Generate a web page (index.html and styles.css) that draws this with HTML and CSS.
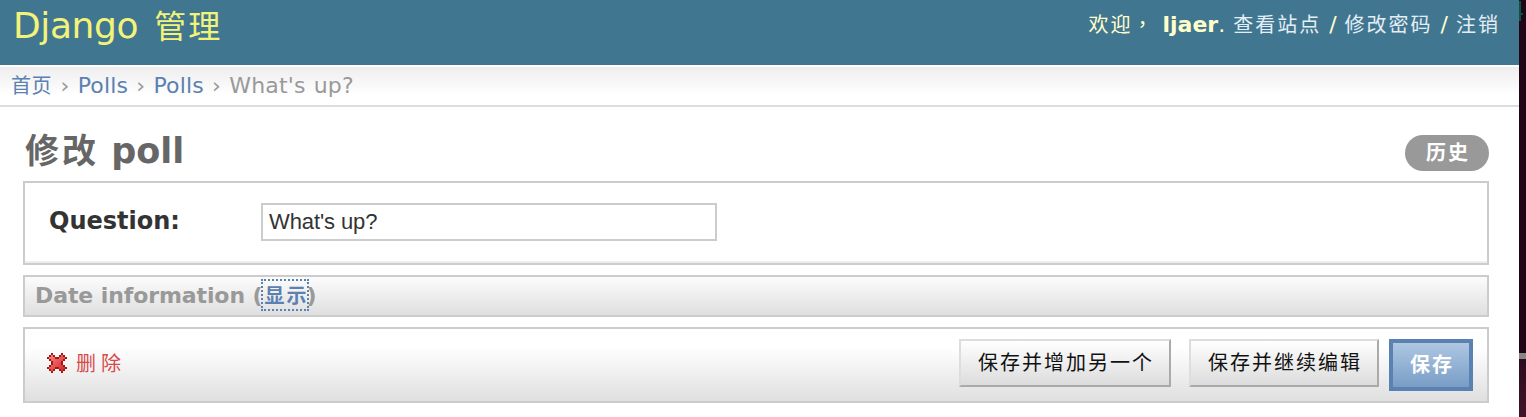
FILE: index.html
```html
<!DOCTYPE html>
<html lang="zh-CN">
<head>
<meta charset="utf-8">
<title>修改 poll | Django 管理</title>
<link rel="stylesheet" href="styles.css">
</head>
<body>
<div class="screen">
  <div class="page">
    <header class="header">
      <div class="branding">Django <span class="zh-title">管理</span></div>
      <div class="user-tools"><span class="zh">欢迎<span class="comma" lang="zh-TW">，</span></span> <strong>ljaer</strong>. <a class="zh">查看站点</a> / <a class="zh">修改密码</a> / <a class="zh">注销</a></div>
    </header>
    <nav class="breadcrumbs"><a class="zh">首页</a> › <a>Polls</a> › <a>Polls</a> › What's up?</nav>
    <main class="content">
      <div class="title-row">
        <h1><span class="zh-title">修改</span> poll</h1>
        <a class="history zh">历史</a>
      </div>
      <section class="module question">
        <label for="question">Question:</label>
        <input id="question" type="text" value="What's up?">
      </section>
      <section class="module date"><h2>Date information (<a class="toggle zh">显示</a>)</h2></section>
      <section class="module submit-row">
        <a class="delete">
          <svg width="20" height="20" viewBox="0 0 10 10" shape-rendering="crispEdges">
            <defs><linearGradient id="red" x1="0" y1="0" x2="1" y2="1"><stop offset="0" stop-color="#ff8080"/><stop offset="1" stop-color="#d02626"/></linearGradient></defs>
            <path fill="#a51616" d="M2 0h1v1h1v1h2V1h1V0h1v1h1v1h1v1H9v1H8v2h1v1h1v1H9v1H8v1H7V9H6V8H4v1H3v1H2V9H1V8H0V7h1V6h1V4H1V3H0V2h1V1h1z"/>
            <path fill="url(#red)" d="M2 1h1v1h1v1h2V2h1V1h1v1h1v1H8v1H7v2h1v1h1v1H8v1H7V8H6V7H4v1H3v1H2V8H1V7h1V6h1V4H2V3H1V2h1z"/>
          </svg>
          <span class="zh">删除</span>
        </a>
        <div class="buttons">
          <button class="button another zh">保存并增加另一个</button>
          <button class="button continue zh">保存并继续编辑</button>
          <button class="button save zh">保存</button>
        </div>
      </section>
    </main>
  </div>
  <aside class="desktop-edge"><div class="edge-top"></div><div class="edge-line"></div><div class="edge-bottom"></div></aside>
</div>
</body>
</html>
```
FILE: styles.css
```css
* { box-sizing: border-box; }
body { margin: 0; background: #fff; }
.screen { display: flex; width: 1526px; height: 417px; overflow: hidden; font: 22px/26px "DejaVu Sans", "Noto Sans CJK SC", sans-serif; }
.page { width: 1519px; flex: none; }
.zh { font-family: "Noto Sans CJK SC", sans-serif; font-size: 20px; letter-spacing: 2px; line-height: 24px; }
.zh-title { font-family: "Noto Sans CJK SC", sans-serif; font-size: 32px; letter-spacing: 3px; line-height: 40px; }
.header { height: 65px; display: flex; justify-content: space-between; background: #417690; color: #ffc; padding: 4px 19px 0 13px; }
.branding { font-size: 36px; line-height: 40px; color: #f4f379; letter-spacing: -0.4px; white-space: nowrap; }
.branding .zh-title { margin-left: 5px; letter-spacing: 2px; }
.user-tools { padding-top: 8px; white-space: nowrap; word-spacing: 1px; }
.user-tools a { color: #e3eef5; }
.comma { font-family: "Noto Sans CJK TC", sans-serif; }
.breadcrumbs { height: 40px; margin-top: 2px; border-bottom: 2px solid #ddd; background: linear-gradient(#eee, #fff 75%); color: #999; padding: 6px 0 0 11px; white-space: nowrap; letter-spacing: 0.15px; word-spacing: 1.1px; }
.breadcrumbs a { color: #5b80b2; }
.breadcrumbs .zh { letter-spacing: 0.6px; }
.content { padding: 22px 30px 0 23px; }
.title-row { height: 52px; display: flex; justify-content: space-between; }
h1 { margin: 0; padding-left: 2px; font-size: 35px; line-height: 42px; color: #666; white-space: nowrap; }
h1 .zh-title { font-size: 34px; }
.history { width: 84px; height: 36px; margin-top: 6px; border-radius: 18px; background: #999; color: #fff; font-weight: bold; text-align: center; line-height: 34px; padding-left: 2px; }
.module { border: 2px solid #ccc; margin-bottom: 10px; }
.question { height: 84px; display: flex; padding: 20px 0 0 24px; box-shadow: inset 0 -2px #eee; }
.question label { width: 212px; font-size: 24px; font-weight: bold; line-height: 36px; color: #333; }
.question input { width: 456px; height: 38px; border: 2px solid #ccc; margin: 0; padding: 2px 6px; font: 22px "Liberation Sans", sans-serif; color: #333; background: #fff; letter-spacing: -0.1px; }
.date { height: 42px; background: linear-gradient(#fcfcfc, #dfdfdf); }
h2 { margin: 0; padding: 2px 0 0 10px; font-size: 22px; line-height: 34px; color: #999; display: flex; white-space: pre; letter-spacing: -0.1px; }
.toggle { display: block; width: 48px; height: 32px; line-height: 28px; border: 2px dotted #5b80b2; color: #5b80b2; margin: 0 -3px 0 -1px; padding-left: 1px; }
.submit-row { height: 76px; display: flex; justify-content: space-between; background: linear-gradient(#fff 25%, #dfdfdf); padding: 10px 14px 0 22px; margin: 0; }
.delete { display: flex; align-items: center; height: 48px; gap: 9px; color: #d84a4a; }
.delete .zh { letter-spacing: 5px; }
.buttons { display: flex; align-items: flex-start; }
.button { height: 48px; padding: 0 0 2px 2px; border: 2px solid; border-color: #ddd #aaa #aaa #ddd; background: linear-gradient(#fff, #dcdcdc); color: #111; white-space: nowrap; }
.another { width: 212px; margin-right: 18px; }
.continue { width: 190px; margin-right: 10px; }
.save { width: 84px; height: 52px; border: 4px solid #5b80b2; background: linear-gradient(#aec7e2, #789dc6); color: #fff; font-weight: bold; }
.desktop-edge { width: 7px; flex: none; display: flex; flex-direction: column; }
.edge-top { height: 353px; background: linear-gradient(#075543, #075543) 0 1px / 2px 20px no-repeat, linear-gradient(#075543, #075543) 2px 13px / 2px 2px no-repeat, #200519; }
.edge-line { height: 6px; background: #888584; }
.edge-bottom { flex: 1; background: linear-gradient(#2b0b20, #421329); }
```
